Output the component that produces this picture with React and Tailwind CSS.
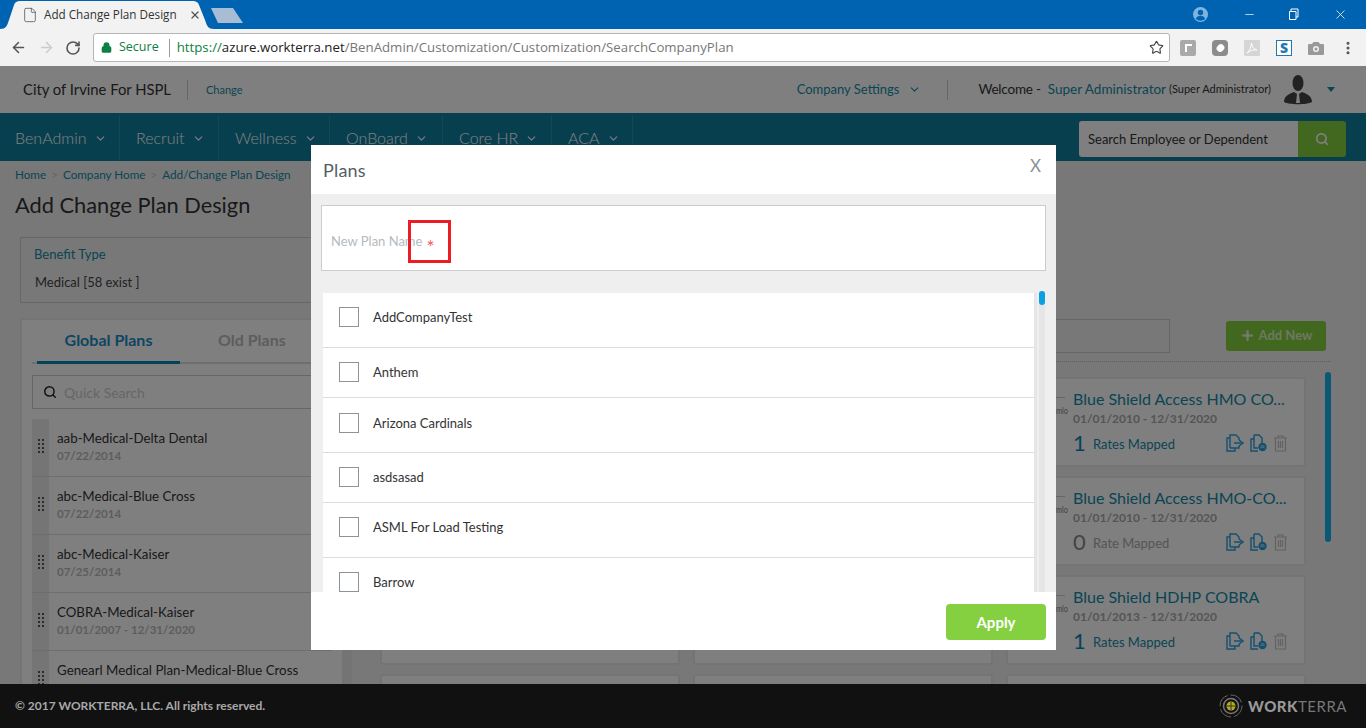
import { ArrowLeft, ArrowRight, RotateCw, Lock, Star, X, Minus, EllipsisVertical, ChevronDown, Search, Plus, File } from 'lucide-react';

const navItems = [
  { label: 'BenAdmin', width: 'w-[120px]', pad: 'pl-[15px]' },
  { label: 'Recruit', width: 'w-[99px]', pad: 'pl-[16px]' },
  { label: 'Wellness', width: 'w-[111px]', pad: 'pl-[16px]' },
  { label: 'OnBoard', width: 'w-[113px]', pad: 'pl-[16px]' },
  { label: 'Core HR', width: 'w-[109px]', pad: 'pl-[16px]' },
  { label: 'ACA', width: 'w-[81px]', pad: 'pl-[16px]' },
];

const plans = [
  { name: 'aab-Medical-Delta Dental', date: '07/22/2014' },
  { name: 'abc-Medical-Blue Cross', date: '07/22/2014' },
  { name: 'abc-Medical-Kaiser', date: '07/25/2014' },
  { name: 'COBRA-Medical-Kaiser', date: '01/01/2007 - 12/31/2020' },
  { name: 'Genearl Medical Plan-Medical-Blue Cross' },
];

const cards = [
  { title: 'Blue Shield Access HMO CO...', date: '01/01/2010 - 12/31/2020', count: 1, label: 'Rates Mapped' },
  { title: 'Blue Shield Access HMO-CO...', date: '01/01/2010 - 12/31/2020', count: 0, label: 'Rate Mapped' },
  { title: 'Blue Shield HDHP COBRA', date: '01/01/2013 - 12/31/2020', count: 1, label: 'Rates Mapped' },
];

const modalRows = [
  { name: 'AddCompanyTest', height: 'h-[55px]', pad: 'pt-[14px]' },
  { name: 'Anthem', height: 'h-[50px]', pad: 'pt-[14px]' },
  { name: 'Arizona Cardinals', height: 'h-[55px]', pad: 'pt-[15px]' },
  { name: 'asdsasad', height: 'h-[50px]', pad: 'pt-[14px]' },
  { name: 'ASML For Load Testing', height: 'h-[55px]', pad: 'pt-[14px]' },
  { name: 'Barrow', height: 'h-[50px]', pad: 'pt-[14px]' },
];

function Grip() {
  return (
    <div className="grid grid-cols-2 gap-x-[2px] gap-y-[2px]">
      {[0, 1, 2, 3, 4, 5, 6, 7].map((i) => (
        <span key={i} className="w-[2px] h-[2px] bg-[#555]"></span>
      ))}
    </div>
  );
}

function MoveIcon() {
  return (
    <svg width="18" height="18" viewBox="0 0 18 18" fill="none" stroke="#2a9fe0" strokeWidth="1.4">
      <path d="M4 4H1v13h8v-3" />
      <path d="M4 14V1h6l3 3v2M13 12v2H4" />
      <path d="M8 9h7M13 6l4 3-4 3" strokeWidth="1.5" />
    </svg>
  );
}

function RateIcon() {
  return (
    <svg width="17" height="18" viewBox="0 0 17 18" fill="none" stroke="#2a9fe0" strokeWidth="1.4">
      <path d="M4 1h5l3 3v5M8 17H1V5h3M4 1v13h4" />
      <circle cx="12.5" cy="13" r="4.2" fill="#2a9fe0" stroke="none" />
      <path d="M10.5 12.4c1-1 2.800-1 4 0M10.500 14c1-1 2.800-1 4 0" stroke="#fff" strokeWidth="0.8" />
    </svg>
  );
}

function TrashIcon() {
  return (
    <svg width="15" height="17" viewBox="0 0 15 17" fill="none" stroke="#c4c4c4" strokeWidth="1.2">
      <path d="M1 3h13M5 3V1h5v2M2.500 3v13h10V3M5.500 6v7M7.500 6v7M9.500 6v7" />
    </svg>
  );
}

function PlanCard({ card, showText, showIcons }) {
  return (
    <div className="h-[90px] bg-white border-2 border-[#e8e8e8] rounded-[3px] flex overflow-hidden">
      <div className="w-[65px] shrink-0 flex flex-col items-end pr-[8px]">
        {showText && <span className="mt-[18px] w-[35px] h-px bg-[#ccc]"></span>}
        {showText && <span className="mt-[6px] -mr-[6px] text-[10px] leading-[12px] text-[#888] scale-x-75">wmlo</span>}
      </div>
      <div className="flex-1 min-w-0 pt-[9px] pr-[16px]">
        {showText && <div className="text-[16px] leading-[22px] text-[#128aa8] whitespace-nowrap">{card.title}</div>}
        {showText && <div className="text-[12px] leading-[14px] font-bold text-[#aaa] mt-[2px]">{card.date}</div>}
        {showIcons && (
          <div className={`flex items-center ${showText ? 'mt-[3px]' : 'mt-[41px]'}`}>
            {showText && <span className={`text-[22px] leading-[28px] w-[20px] ${card.count ? 'text-[#0f86b0]' : 'text-[#888]'}`}>{card.count}</span>}
            {showText && <span className={`text-[13px] mt-[4px] ${card.count ? 'text-[#128aa8]' : 'text-[#aaa]'}`}>{card.label}</span>}
            <div className="ml-auto flex items-center gap-[6px]">
              <MoveIcon />
              <RateIcon />
              <TrashIcon />
            </div>
          </div>
        )}
      </div>
    </div>
  );
}

function ChromeBar() {
  return (
    <div className="font-['Open_Sans',sans-serif]">
      <div className="h-[29px] bg-[#0063b1] flex relative">
        <svg className="absolute left-0 top-0" width="245" height="29" viewBox="0 0 245 29">
          <path d="M0 29 C6 29 7 26 9 20 L14 5 C15 2 17 1 20 1 L192 1 C196 1 198 2 199 5 L205 20 C207 26 208 29 214 29 Z" fill="#f2f2f2" />
          <path d="M211 8 L233 8 L243 23 L218 23 Z" fill="#a8bdd4" />
        </svg>
        <div className="relative flex items-center h-full pl-[22px] gap-[6px]">
          <File size={16} strokeWidth={1.2} className="text-[#555]" />
          <span className="text-[11.7px] text-[#333] w-[139px] whitespace-nowrap">Add Change Plan Design</span>
          <X size={12} strokeWidth={2.6} className="text-[#555]" />
        </div>
        <div className="ml-auto flex items-center text-white">
          <svg width="15" height="15" viewBox="0 0 15 15" className="mr-[35px]">
            <circle cx="7.500" cy="7.500" r="7.500" fill="#7db4e0" />
            <circle cx="7.500" cy="5.500" r="2.700" fill="#0063b1" />
            <path d="M2.800 12c.6-2.500 2.500-3.300 4.700-3.300s4.100.8 4.700 3.300a7 7 0 0 1-9.400 0z" fill="#0063b1" />
          </svg>
          <Minus size={13} strokeWidth={1.3} className="mr-[32px]" />
          <svg width="12" height="13" viewBox="0 0 12 13" fill="none" stroke="#fff" className="mr-[33px]">
            <path d="M3 3V1h7v8H8M1.500 3.500h6.500v8H1.500z" />
          </svg>
          <X size={15} strokeWidth={1.2} className="mr-[18px]" />
        </div>
      </div>
      <div className="h-[37px] bg-[#f2f2f2] flex items-center">
        <ArrowLeft size={17} strokeWidth={2.2} className="ml-[10px] text-[#555]" />
        <ArrowRight size={17} strokeWidth={2.2} className="ml-[11px] text-[#ccc]" />
        <RotateCw size={16} strokeWidth={2.4} className="ml-[10px] text-[#555]" />
        <div className="ml-[12px] w-[1077px] h-[29px] bg-white border border-[#b5b5b5] rounded-[3px] flex items-center text-[13.25px] whitespace-nowrap">
          <Lock size={11} strokeWidth={3} fill="#0b8043" className="ml-[7px] text-[#0b8043]" />
          <span className="ml-[7px] text-[#0b8043] text-[12.5px]">Secure</span>
          <span className="ml-[10px] w-px h-[18px] bg-[#999]"></span>
          <span className="ml-[7px] text-[#0b8043]">https://</span>
          <span className="text-[#222]">azure.workterra.net</span>
          <span className="text-[#777]">/BenAdmin/Customization/Customization/SearchCompanyPlan</span>
          <Star size={15} strokeWidth={1.8} className="ml-auto mr-[5px] text-[#444]" />
        </div>
        <div className="ml-[10px] w-[16px] h-[16px] bg-[#aaa] rounded-[2px] flex items-center justify-center">
          <span className="w-[7px] h-[8px] border-l-2 border-t-2 border-white"></span>
        </div>
        <div className="ml-[16px] w-[16px] h-[16px] bg-[#8c8c8c] rounded-[4px] flex items-center justify-center">
          <span className="w-[7px] h-[8px] bg-white rounded-full rotate-45"></span>
        </div>
        <svg className="ml-[16px]" width="16" height="16" viewBox="0 0 16 16" fill="none">
          <rect width="16" height="16" rx="1" fill="#d5d5d5" />
          <path d="M3 13c3-2 4-6 4.500-10 .5 4 2 6 5.500 7-3.500-.5-7 .5-10 3z" stroke="#fff" />
        </svg>
        <div className="ml-[16px] w-[16px] h-[16px] bg-white border border-[#1f78b4] text-[#1f78b4] text-[14px] font-black leading-[14px] text-center">S</div>
        <svg className="ml-[16px]" width="16" height="14" viewBox="0 0 16 14">
          <path d="M1 3h3l1.500-2h5L12 3h3a1 1 0 0 1 1 1v9a1 1 0 0 1-1 1H1a1 1 0 0 1-1-1V4a1 1 0 0 1 1-1z" fill="#999" />
          <circle cx="8" cy="8" r="3" fill="#f2f2f2" />
          <circle cx="8" cy="8" r="1.500" fill="#999" />
        </svg>
        <EllipsisVertical size={16} strokeWidth={2.6} className="ml-[16px] text-[#555]" />
      </div>
    </div>
  );
}

function PageHeader() {
  return (
    <div className="h-[47px] bg-white flex items-center text-[#333] shrink-0">
      <span className="ml-[23px] text-[14.8px]">City of Irvine For HSPL</span>
      <span className="ml-[16px] w-px h-[20px] bg-[#ccc]"></span>
      <span className="ml-[18px] mt-[2px] text-[11px] text-[#128aa8]">Change</span>
      <span className="ml-auto text-[13px] text-[#128aa8]">Company Settings</span>
      <ChevronDown size={13} className="ml-[9px] text-[#128aa8]" />
      <span className="ml-[26px] w-px h-[20px] bg-[#ccc]"></span>
      <span className="ml-[30px] text-[13.5px] tracking-[-0.2px]">Welcome -</span>
      <span className="ml-[7px] text-[13.5px] text-[#128aa8]">Super Administrator</span>
      <span className="ml-[3px] text-[11px]">(Super Administrator)</span>
      <svg className="ml-[12px]" width="30" height="32" viewBox="0 0 30 32" fill="#444">
        <ellipse cx="15" cy="9" rx="5.500" ry="8" />
        <path d="M1 28c0-6 5-8 10-10l3 2-1 9h4l-1-9 3-2c5 2 10 4 10 10-5 3-23 3-28 0z" />
      </svg>
      <span className="ml-[14px] mr-[31px] w-0 h-0 border-x-[4px] border-x-transparent border-t-[5px] border-t-[#128aa8]"></span>
    </div>
  );
}

function NavBar() {
  return (
    <div className="h-[48px] bg-[#107e9e] flex items-end shrink-0">
      {navItems.map((item) => (
        <div
          key={item.label}
          className={`${item.width} ${item.pad} h-[46px] flex items-center border-r border-[#2a8dab] text-[16px] font-light text-white`}
        >
          <span>{item.label}</span>
          <ChevronDown size={13} className="ml-[7px]" />
        </div>
      ))}
      <div className="ml-auto mr-[20px] flex h-[36px] w-[267px] self-start mt-[8px]">
        <div className="flex-1 bg-white rounded-l-[3px] pl-[9px] pt-[1px] flex items-center text-[13px] text-[#333]">Search Employee or Dependent</div>
        <div className="w-[48px] bg-[#84d040] rounded-r-[3px] flex items-center justify-center">
          <Search size={14} strokeWidth={3} className="text-white" />
        </div>
      </div>
    </div>
  );
}

function LeftPanel() {
  return (
    <div className="w-[324px] shrink-0 bg-white border-2 border-[#e8e8e8] rounded-[3px] px-[10px] h-[400px]">
      <div className="flex h-[44px] border-b-2 border-[#ddd] text-[16px] font-bold">
        <div className="ml-[5px] w-[143px] h-[44px] border-b-[3px] border-[#0f86b0] text-center leading-[39px] text-[#1a8cc4]">Global Plans</div>
        <div className="ml-[38px] leading-[39px] text-[#bbb]">Old Plans</div>
      </div>
      <div className="mt-[11px] h-[34px] border border-[#ccc] flex items-center pl-[10px]">
        <Search size={14} strokeWidth={2.5} className="text-[#222]" />
        <span className="ml-[7px] text-[14px] text-[#ccc]">Quick Search</span>
      </div>
      <div className="mt-[10px]">
        {plans.map((plan) => (
          <div key={plan.name} className="h-[58px] flex border-b border-[#ddd]">
            <div className="w-[17px] bg-[#ebebeb] flex items-center justify-center shrink-0 pb-[4px]">
              <Grip />
            </div>
            <div className="pl-[8px] pt-[10px]">
              <div className="text-[13.3px] leading-[18px] text-[#333] whitespace-nowrap">{plan.name}</div>
              {plan.date && <div className="text-[11.5px] leading-[14px] mt-[2px] font-bold text-[#bbb]">{plan.date}</div>}
            </div>
          </div>
        ))}
      </div>
    </div>
  );
}

function RightPanel() {
  return (
    <div className="flex-1 min-w-0 flex">
      <div className="w-[8px] h-[400px] bg-[#e8e8e8] shrink-0"></div>
      <div className="flex-1 min-w-0 pl-[28px]">
        <div className="flex items-center h-[44px] border-b border-dotted border-[#bbb] pb-[8px] mr-[20px]">
          <div className="ml-auto w-[300px] h-[34px] border border-[#ccc]"></div>
          <div className="ml-[56px] mr-[5px] w-[100px] h-[30px] bg-[#84d040] rounded-[3px] flex items-center justify-center text-[13px] font-bold text-white/70">
            <Plus size={15} strokeWidth={4} className="mr-[4px]" />
            Add New
          </div>
        </div>
        <div className="flex mt-[15px] mr-[20px]">
          <div className="grid grid-cols-[repeat(3,300px)] gap-x-[13px] gap-y-[9px]">
            {[0, 1, 2, 3].map((row) =>
              [0, 1, 2].map((col) => (
                <PlanCard key={`${row}-${col}`} card={cards[row]} showText={col === 2 && row < 3} showIcons={row < 3} />
              ))
            )}
          </div>
          <div className="ml-auto w-[6px] h-[170px] -mt-[5px] bg-[#14b0e8] rounded-full shrink-0"></div>
        </div>
      </div>
    </div>
  );
}

function PlansModal() {
  return (
    <div className="absolute left-[311px] top-[79px] w-[745px] h-[505px] bg-white flex flex-col z-20">
      <div className="h-[49px] flex items-center justify-between pl-[12px] pr-[15px] shrink-0">
        <span className="text-[18px] text-[#555e66] tracking-[0.2px] mt-[2px]">Plans</span>
        <span className="text-[17px] text-[#8a9299] -mt-[8px]">X</span>
      </div>
      <div className="h-[398px] bg-[#efefef] px-[10px] pt-[11px] shrink-0 overflow-hidden">
        <div className="relative h-[66px] bg-white border border-[#ccc] flex items-center pl-[9px]">
          <span className="mt-[8px] text-[13px] text-[#b4bbc0]">New Plan Name</span>
          <span className="ml-[4px] mt-[16px] text-[19px] leading-[19px] text-[#f55]">*</span>
          <div className="absolute left-[86px] top-[14px] w-[43px] h-[43px] border-[3px] border-[#ed1c24]"></div>
        </div>
        <div className="flex mt-[22px] pl-[2px]">
          <div className="w-[714px] h-[299px] bg-white overflow-hidden border-r-[3px] border-[#e6e6e6]">
            {modalRows.map((row) => (
              <div key={row.name} className={`${row.height} ${row.pad} shrink-0 border-b border-[#ddd] flex items-start pl-[16px] gap-[14px]`}>
                <span className="w-[20px] h-[20px] border border-[#8d9499] shrink-0"></span>
                <span className="text-[13px] leading-[20px] text-[#333]">{row.name}</span>
              </div>
            ))}
          </div>
          <div className="ml-[2px] w-[6px] h-[301px] bg-[#e6e6e6] -mt-[2px]">
            <div className="w-[6px] h-[14px] bg-[#0d9fe0] rounded-full"></div>
          </div>
        </div>
      </div>
      <div className="flex-1 flex items-start justify-end pt-[12px] pr-[10px]">
        <button className="w-[100px] h-[36px] bg-[#84d040] rounded-[4px] text-[15px] font-bold text-white">Apply</button>
      </div>
    </div>
  );
}

function Footer() {
  return (
    <div className="relative z-10 h-[44px] bg-[#111] flex items-center shrink-0">
      <span className="ml-[15px] text-[12px] font-bold text-[#a8a8a8]">© 2017 WORKTERRA, LLC. All rights reserved.</span>
      <div className="ml-auto mr-[19px] flex items-center">
        <svg width="24" height="24" viewBox="0 0 24 24" fill="none">
          <circle cx="12" cy="12" r="11" stroke="#666" strokeDasharray="14 3" />
          <circle cx="12" cy="12" r="7.500" stroke="#777" strokeWidth="1.500" />
          <circle cx="12" cy="12" r="4.500" fill="#b5ac1e" />
          <path d="M12 8v8M8 12h8" stroke="#333" />
        </svg>
        <span className="ml-[5px] text-[15px] tracking-[0.5px] text-[#999] font-black">WORK<span className="font-normal text-[#777]">TERRA</span></span>
      </div>
    </div>
  );
}

export default function App() {
  return (
    <div className="h-screen flex flex-col overflow-hidden font-['Lato',sans-serif]">
      <ChromeBar />
      <div className="relative flex-1 min-h-0 flex flex-col">
        <PageHeader />
        <NavBar />
        <div className="flex-1 min-h-0 overflow-hidden bg-[#f0f0f0] px-[15px]">
          <div className="pt-[6px] text-[11.7px] leading-[14px] text-[#128aa8] flex items-center whitespace-nowrap">
            <span>Home</span>
            <span className="mx-[5px] text-[#ccc]">&gt;</span>
            <span>Company Home</span>
            <span className="mx-[5px] text-[#ccc]">&gt;</span>
            <span>Add/Change Plan Design</span>
          </div>
          <h1 className="mt-[9px] text-[21.8px] leading-[30px] text-[#333]">Add Change Plan Design</h1>
          <div className="mt-[17px] ml-[5px] w-[500px] h-[66px] border border-[#ccc] pl-[13px] pt-[7px]">
            <div className="text-[13px] leading-[18px] text-[#128aa8]">Benefit Type</div>
            <div className="mt-[10px] ml-[1px] text-[13px] leading-[18px] text-[#444]">Medical [58 exist ]</div>
          </div>
          <div className="mt-[15px] ml-[5px] flex">
            <LeftPanel />
            <RightPanel />
          </div>
        </div>
        <Footer />
        <div className="absolute inset-0 bg-black/50"></div>
        <PlansModal />
      </div>
    </div>
  );
}
